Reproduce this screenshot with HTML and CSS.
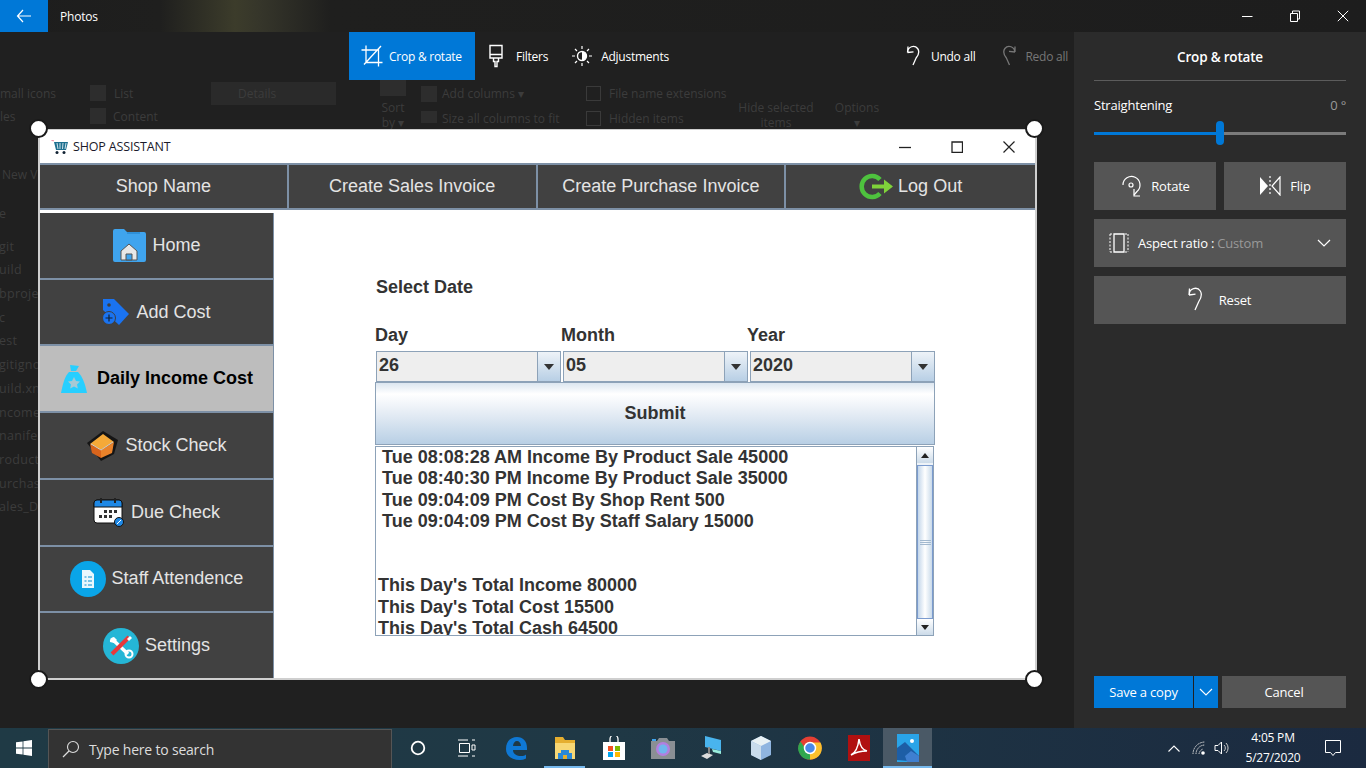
FILE: index.html
```html
<!DOCTYPE html>
<html lang="en">
<head>
<meta charset="utf-8">
<title>Photos</title>
<link rel="stylesheet" href="styles.css">
</head>
<body>
<div class="screen">
  <header class="titlebar">
    <button class="back" aria-label="Back"><svg width="16" height="16" viewBox="0 0 16 16"><path d="M7 2 1.5 8 7 14M1.5 8H15" fill="none" stroke="#fff" stroke-width="1.2"/></svg></button>
    <span class="app-name">Photos</span>
    <div class="win-controls">
      <svg width="12" height="12" viewBox="0 0 12 12"><path d="M1 6.5h10.5" stroke="#fff" fill="none"/></svg>
      <svg width="12" height="12" viewBox="0 0 12 12"><path d="M1.5 3.5h7v8h-7zM3.5 3.5v-2.500h7v8h-2" stroke="#fff" fill="none"/></svg>
      <svg width="12" height="12" viewBox="0 0 12 12"><path d="M.8.800l10.400 10.400M11.200.800.800 11.200" stroke="#fff" fill="none"/></svg>
    </div>
  </header>

  <div class="workspace">
    <main class="stage">
      <div class="ghosts">
        <span class="ghost g1">mall icons</span><span class="ghost g2">List</span><span class="ghost g3">Details</span><span class="ghost g4">les</span><span class="ghost g5">Content</span>
        <span class="ghost g6">Sort<br>by ▾</span><span class="ghost g7">Add columns ▾</span><span class="ghost g8">Size all columns to fit</span><span class="ghost g9">File name extensions</span><span class="ghost g10">Hidden items</span>
        <span class="ghost g11">Hide selected<br>items</span><span class="ghost g12">Options<br>▾</span><span class="ghost g13">New V</span>
        <div class="ghost-list"><span>e</span><span class="gap-line">git</span><span>uild</span><span>bproje</span><span>c</span><span>est</span><span>gitigno</span><span>uild.xn</span><span>ncome_</span><span>nanifes</span><span>roduct</span><span>urchas</span><span>ales_Da</span></div>
        <i class="ghost-box b1"></i><i class="ghost-box b2"></i><i class="ghost-box b3"></i><i class="ghost-box b4"></i><i class="ghost-box b5"></i><i class="ghost-box b6"></i><i class="ghost-box b7"></i>
      </div>

      <nav class="toolbar">
        <div class="tool tool-crop">
          <svg width="22" height="22" viewBox="0 0 22 22"><path d="M5 .500V17.500H21.500M.500 5H17.500V21.500M3 19.500 20 1" fill="none" stroke="#fff" stroke-width="1.300"/></svg>
          <span>Crop &amp; rotate</span>
        </div>
        <div class="tool tool-filters">
          <svg width="16" height="24" viewBox="0 0 16 24"><path d="M2 1.500h12V14H2zM2 10.500h12M5.500 14v3.500h1.500v5h2v-5h1.500V14" fill="none" stroke="#fff" stroke-width="1.400"/></svg>
          <span>Filters</span>
        </div>
        <div class="tool tool-adjust">
          <svg width="20" height="20" viewBox="0 0 20 20"><circle cx="10" cy="10" r="4.500" fill="none" stroke="#fff" stroke-width="1.400"/><path d="M10 5.500a4.500 4.500 0 0 1 0 9z" fill="#fff"/><path d="M10 0v3M10 17v3M0 10h3M17 10h3M3 3l2 2M15 15l2 2M17 3l-2 2M5 15l-2 2" stroke="#fff" stroke-width="1.200"/></svg>
          <span>Adjustments</span>
        </div>
        <div class="tool tool-undo">
          <svg width="16" height="22" viewBox="0 0 16 22"><path d="M1.500 7.500 2 1.500M1.500 7.500 7.500 6.800M1.800 7a5.500 5.500 0 0 1 9.800-3.500c2.500 3.500.500 7-1.500 9.500L7 20" fill="none" stroke="#fff" stroke-width="1.300"/></svg>
          <span>Undo all</span>
        </div>
        <div class="tool tool-redo">
          <svg width="16" height="22" viewBox="0 0 16 22"><path d="M14 7 14 1.500M14 7 8 6.300M13.700 7a5.500 5.500 0 0 0-9.800-3.500c-2.500 3.500-.500 7 1.500 9.500L8.500 20" fill="none" stroke="#777" stroke-width="1.300"/></svg>
          <span>Redo all</span>
        </div>
      </nav>

      <section class="app-window">
        <i class="handle h-tl"></i><i class="handle h-tr"></i><i class="handle h-bl"></i><i class="handle h-br"></i>
        <div class="app-title">
          <svg width="18" height="16" viewBox="0 0 18 16"><path d="M.5 1.500 3 1.800" stroke="#f08aa0" fill="none"/><path d="M3 3h14l-2 8H5z" fill="#1d6f8f"/><path d="M6 4l1 6M9 4v6M12 4l-.5 6M15 4l-1 6" stroke="#fff" stroke-width=".8"/><circle cx="6" cy="13.500" r="1.500" fill="#123"/><circle cx="13" cy="13.500" r="1.500" fill="#123"/></svg>
          <span class="app-title-text">SHOP ASSISTANT</span>
          <div class="app-controls">
            <svg width="12" height="12" viewBox="0 0 12 12"><path d="M0 6.500h12" stroke="#222" stroke-width="1.300" fill="none"/></svg>
            <svg width="12" height="12" viewBox="0 0 12 12"><path d="M1 1h10.500v10.500H1z" stroke="#222" stroke-width="1.300" fill="none"/></svg>
            <svg width="12" height="12" viewBox="0 0 12 12"><path d="M.5.500l11 11M11.500.500l-11 11" stroke="#222" stroke-width="1.200" fill="none"/></svg>
          </div>
        </div>
        <div class="app-nav">
          <div class="nav-cell">Shop Name</div>
          <div class="nav-cell">Create Sales Invoice</div>
          <div class="nav-cell">Create Purchase Invoice</div>
          <div class="nav-cell nav-logout">
            <svg width="35" height="27" viewBox="0 0 35 27"><path d="M21 6.500A10.500 10.500 0 1 0 21 20.500" fill="none" stroke="#4ec23e" stroke-width="4.500"/><path d="M13 11.500h12V6.500l9 7-9 7v-5H13z" fill="#7fd23a"/></svg>
            <span>Log Out</span>
          </div>
        </div>
        <div class="app-body">
          <aside class="sidebar">
            <div class="side-item">
              <svg width="34" height="34" viewBox="0 0 34 34"><path d="M1 3a2 2 0 0 1 2-2h9l3 3h17a2 2 0 0 1 2 2v26a2 2 0 0 1-2 2H3a2 2 0 0 1-2-2z" fill="#3fa4ee"/><path d="M15 5h13" stroke="#1f7cc4"/><path d="M9 23l8-7 8 7v9H9z" fill="#e8e8e8" stroke="#555"/><path d="M14 32v-6h6v6z" fill="#3fa4ee" stroke="#555"/></svg>
              <span>Home</span>
            </div>
            <div class="side-item">
              <svg width="28" height="28" viewBox="0 0 28 28"><path d="M1 1h11l15 15-10 11L1 12z" fill="#1a73f0"/><circle cx="7" cy="7" r="1.800" fill="#3f3f3f"/><circle cx="7" cy="20" r="6.500" fill="#1a73f0" stroke="#3f3f3f"/><path d="M3.500 20h7M7 16.500v7" stroke="#123" stroke-width="1.200"/></svg>
              <span>Add Cost</span>
            </div>
            <div class="side-item active">
              <svg width="28" height="30" viewBox="0 0 28 30"><path d="M10 1l9 1-3 5h-5z" fill="#27cfff"/><path d="M9 8h9c4 4 7 11 9 21H1C3 19 5 12 9 8z" fill="#27cfff"/><path d="M14 13l2 4 4 .5-3 3 .8 4-3.800-2-3.800 2 .8-4-3-3 4-.5z" fill="#a6c9d4"/></svg>
              <span>Daily Income Cost</span>
            </div>
            <div class="side-item">
              <svg width="33" height="32" viewBox="0 0 33 32"><path d="M1 13 17 1l15 9-4 14-13 7z" fill="#151515"/><path d="M4 14 17 4l11 8-13 8z" fill="#f5a938"/><path d="M4 14l11 6v8l-9-5z" fill="#d8641c"/><path d="M15 20l13-8-2 11-11 5z" fill="#e9822a"/><path d="M5 14l10 6 12-8" stroke="#ccc" fill="none"/></svg>
              <span>Stock Check</span>
            </div>
            <div class="side-item">
              <svg width="32" height="30" viewBox="0 0 32 30"><rect x="1" y="3" width="28" height="23" rx="3" fill="#fff" stroke="#111"/><path d="M1 10V6a3 3 0 0 1 3-3h22a3 3 0 0 1 3 3v4z" fill="#1e88e5" stroke="#111"/><path d="M8 1v5M22 1v5" stroke="#222" stroke-width="2"/><path d="M11 13h3v3h-3zM16 13h3v3h-3zM21 13h3v3h-3zM6 18h3v3H6zM11 18h3v3h-3zM16 18h3v3h-3z" fill="#333"/><circle cx="26" cy="25" r="4.500" fill="#1e88e5" stroke="#111"/><path d="M24 27l4-4" stroke="#fff"/></svg>
              <span>Due Check</span>
            </div>
            <div class="side-item">
              <svg width="36" height="36" viewBox="0 0 36 36"><circle cx="18" cy="18" r="18" fill="#0aa5e8"/><path d="M12 9h8l4 4v14H12z" fill="#e9f7fd"/><path d="M14.500 16h2M18 16h4M14.500 20h2M18 20h4M14.500 24h2M18 24h4" stroke="#0a8fd0"/></svg>
              <span>Staff Attendence</span>
            </div>
            <div class="side-item">
              <svg width="36" height="36" viewBox="0 0 36 36"><circle cx="18" cy="18" r="18" fill="#25b6d6"/><path d="M9 11l16 15" stroke="#fff" stroke-width="3.500"/><circle cx="26" cy="26" r="3.500" fill="none" stroke="#fff" stroke-width="2"/><path d="M11 9a4 4 0 0 0-4 5l4 1 3-3z" fill="#fff"/><path d="M26 9l-17 17" stroke="#e8383a" stroke-width="4"/><path d="M24 11l3-3 2 2-3 3z" fill="#fff"/></svg>
              <span>Settings</span>
            </div>
          </aside>
          <div class="content">
            <h2 class="select-date">Select Date</h2>
            <div class="date-labels"><span>Day</span><span>Month</span><span>Year</span></div>
            <div class="combos">
              <div class="combo"><span class="combo-value">26</span><span class="combo-arrow"><i></i></span></div>
              <div class="combo"><span class="combo-value">05</span><span class="combo-arrow"><i></i></span></div>
              <div class="combo"><span class="combo-value">2020</span><span class="combo-arrow"><i></i></span></div>
            </div>
            <button class="submit">Submit</button>
            <div class="report">
              <div class="report-text">
                <p class="entry">Tue 08:08:28 AM Income By Product Sale 45000</p>
                <p class="entry">Tue 08:40:30 PM Income By Product Sale 35000</p>
                <p class="entry">Tue 09:04:09 PM Cost By Shop Rent 500</p>
                <p class="entry">Tue 09:04:09 PM Cost By Staff Salary 15000</p>
                <p class="blank">&nbsp;</p>
                <p class="blank">&nbsp;</p>
                <p>This Day's Total Income 80000</p>
                <p>This Day's Total Cost 15500</p>
                <p>This Day's Total Cash 64500</p>
              </div>
              <div class="scrollbar">
                <span class="sb-btn"><i class="up"></i></span>
                <span class="sb-thumb"><b></b></span>
                <span class="sb-btn"><i></i></span>
              </div>
            </div>
          </div>
        </div>
      </section>
    </main>

    <aside class="panel">
      <h1 class="panel-title">Crop &amp; rotate</h1>
      <div class="straight-row"><span>Straightening</span><span class="degree">0 °</span></div>
      <div class="slider"><i class="slider-fill"></i><i class="slider-thumb"></i></div>
      <div class="btn-row">
        <button class="pbtn">
          <svg width="22" height="26" viewBox="0 0 22 26"><path d="M3 12A8.500 8.500 0 1 1 17 18.500L14 22" fill="none" stroke="#fff" stroke-width="1.200"/><path d="M14 16v7h6" fill="none" stroke="#fff" stroke-width="1.200"/><circle cx="11" cy="12" r="2" fill="none" stroke="#fff" stroke-width="1.200"/></svg>
          <span>Rotate</span>
        </button>
        <button class="pbtn">
          <svg width="22" height="20" viewBox="0 0 22 20"><path d="M1 1l8 9-8 9z" fill="#fff"/><path d="M21 1l-8 9 8 9zM11 0v2M11 4v2M11 8v2M11 12v2M11 16v2" fill="none" stroke="#fff" stroke-width="1.200"/></svg>
          <span>Flip</span>
        </button>
      </div>
      <button class="pbtn aspect">
        <svg width="20" height="20" viewBox="0 0 20 20"><path d="M5 1h10v18H5z" fill="none" stroke="#fff" stroke-width="1.300"/><path d="M1 1h3M1 19h3M16 1h3M16 19h3M1 1v18M19 1v18" fill="none" stroke="#fff" stroke-dasharray="2 1.500"/></svg>
        <span class="aspect-text">Aspect ratio : <em>Custom</em></span>
        <svg width="14" height="9" viewBox="0 0 14 9"><path d="M1 1l6 6 6-6" fill="none" stroke="#fff" stroke-width="1.200"/></svg>
      </button>
      <button class="pbtn reset">
        <svg width="18" height="26" viewBox="0 0 18 26"><path d="M2 8 2.500 1.500M2 8l6.500-.8M2.300 7.500a6 6 0 0 1 11-3.500c2.500 4 .500 7.500-1.500 10.500L8 23" fill="none" stroke="#fff" stroke-width="1.300"/></svg>
        <span>Reset</span>
      </button>
      <div class="panel-foot">
        <button class="save">Save a copy</button>
        <button class="save-more" aria-label="More"><svg width="14" height="8" viewBox="0 0 14 8"><path d="M1 1l6 6 6-6" fill="none" stroke="#fff" stroke-width="1.100"/></svg></button>
        <button class="cancel">Cancel</button>
      </div>
    </aside>
  </div>

  <footer class="taskbar">
    <svg class="start" width="16" height="16" viewBox="0 0 16 16"><path d="M0 2.300 6.600 1.400V7.600H0zM7.400 1.300 16 0V7.600H7.400zM0 8.400H6.600V14.600L0 13.700zM7.400 8.400H16V16L7.400 14.700z" fill="#fff"/></svg>
    <div class="searchbox">
      <svg width="18" height="18" viewBox="0 0 18 18"><circle cx="11" cy="7" r="5.500" fill="none" stroke="#ddd" stroke-width="1.100"/><path d="M7 11 1 17" stroke="#ddd" stroke-width="1.200"/></svg>
      <span>Type here to search</span>
    </div>
    <div class="tb-icons">
      <span class="tb-item"><svg width="16" height="16" viewBox="0 0 16 16"><circle cx="8" cy="8" r="6.300" fill="none" stroke="#fff" stroke-width="1.800"/></svg></span>
      <span class="tb-item"><svg width="18" height="18" viewBox="0 0 18 18"><path d="M0 1h10M0 17h10M1.500 4.500h10v9h-10z" fill="none" stroke="#fff" stroke-width="1"/><path d="M14 1h3M14 17h3M14 6h3v5h-3z" fill="none" stroke="#fff"/></svg></span>
      <span class="tb-item"><svg width="22" height="24" viewBox="0 0 22 24"><path d="M1 13C1 5 6 1 12 1c6 0 10 4 10 11v2H8c0 4 4 6 8 6 2 0 4-.5 5-1.500v4c-2 1-4 1.500-6 1.500C7 24 1 20 1 13zM8 10h8c0-3-2-5-4-5s-4 2-4 5z" fill="#0f78d4"/></svg></span>
      <span class="tb-item on"><svg width="22" height="24" viewBox="0 0 22 24"><path d="M1 1h8l2 3h10v19H1z" fill="#e5ae2f"/><path d="M1 7h20v16H1z" fill="#f7d774"/><path d="M7 14h8v3h3v6H4v-6h3z" fill="#2a88d8"/><path d="M9 19h4v4H9z" fill="#e5ae2f"/></svg></span>
      <span class="tb-item"><svg width="22" height="24" viewBox="0 0 22 24"><path d="M0 6h22v18H0z" fill="#fff"/><path d="M7 8V3a4 4 0 0 1 8 0v5" fill="none" stroke="#fff" stroke-width="1.300"/><path d="M5 10h5v5H5z" fill="#f25022"/><path d="M12 10h5v5h-5z" fill="#7fba00"/><path d="M5 16h5v5H5z" fill="#00a4ef"/><path d="M12 16h5v5h-5z" fill="#ffb900"/></svg></span>
      <span class="tb-item"><svg width="24" height="22" viewBox="0 0 24 22"><path d="M0 4h6l2-3h8l2 3h6v18H0z" fill="#8a8f94"/><circle cx="12" cy="12" r="7" fill="#b27fe0"/><circle cx="12" cy="12" r="4.500" fill="#6fb6ee"/><path d="M1 2h4v2H1z" fill="#3fa4ee"/></svg></span>
      <span class="tb-item"><svg width="24" height="26" viewBox="0 0 24 26"><path d="M5 1l16 4v11L5 12z" fill="#49b4ee"/><path d="M21 16l-9-2 1 3 8 2z" fill="#9ed"/><path d="M1 21l6-3 6 2-6 4z" fill="#ddd"/><path d="M9 12v7" stroke="#888" stroke-width="2"/></svg></span>
      <span class="tb-item"><svg width="22" height="26" viewBox="0 0 22 26"><path d="M11 1l10 5v14l-10 5L1 20V6z" fill="#8fb5e0"/><path d="M11 1l10 5-10 5L1 6z" fill="#e8f1f4"/><path d="M11 11v14L1 20V6z" fill="#c9dcec"/></svg></span>
      <span class="tb-item"><svg width="24" height="24" viewBox="0 0 24 24"><circle cx="12" cy="12" r="11.500" fill="#e53f33"/><path d="M12 12 2 18.500A11.500 11.500 0 0 0 12 23.500l1-.1z" fill="#2fa84f"/><path d="M12 6.500h10.500A11.500 11.500 0 0 1 13 23.500l-1-.1z" fill="#fbc02d"/><path d="M2 18.500A11.500 11.500 0 0 1 2.500 5.500L9 15z" fill="#2fa84f"/><circle cx="12" cy="12" r="5.500" fill="#4a89e8" stroke="#fff" stroke-width="1.500"/></svg></span>
      <span class="tb-item"><svg width="22" height="26" viewBox="0 0 22 26"><path d="M0 0h22v26H0z" fill="#b01010"/><path d="M3 20c4-2 7-7 8-16 1 7 3 11 8 12-5 0-11 1-16 4z" fill="none" stroke="#fff" stroke-width="1.500"/></svg></span>
      <span class="tb-item on current"><svg width="22" height="28" viewBox="0 0 22 28"><path d="M0 0h22v28H0z" fill="#2aa4e8"/><path d="M0 26V14l8-6 14 14v6z" fill="#1d5ea6"/><path d="M10 28l-2-6 6-5 8 5v6z" fill="#3f7fd0"/><circle cx="15" cy="7" r="2" fill="#fff"/></svg></span>
    </div>
    <div class="tray">
      <svg width="12" height="7" viewBox="0 0 12 7"><path d="M.5 6.500 6 1l5.500 5.500" fill="none" stroke="#fff" stroke-width="1.100"/></svg>
      <svg class="tray-net" width="14" height="14" viewBox="0 0 14 14"><path d="M1 13A12 12 0 0 1 13 1M4 13a9 9 0 0 1 9-9M7 13a6 6 0 0 1 4-5" fill="none" stroke="#ddd" stroke-dasharray="1.500 .8"/><circle cx="11" cy="12" r="1.800" fill="#fff"/></svg>
      <svg class="tray-vol" width="16" height="16" viewBox="0 0 16 16"><path d="M1 5.500h3L7.500 2v12L4 10.500H1z" fill="none" stroke="#fff"/><path d="M10 5a4 4 0 0 1 0 6M12 3a7 7 0 0 1 0 10" fill="none" stroke="#ccc"/></svg>
      <div class="clock"><span>4:05 PM</span><span>5/27/2020</span></div>
      <svg class="tray-note" width="16" height="16" viewBox="0 0 16 16"><path d="M.500.500h15v12h-5l-2.500 3-2.500-3h-5z" fill="none" stroke="#fff"/></svg>
    </div>
  </footer>
</div>
</body>
</html>
```
FILE: styles.css
```css
* { box-sizing: border-box; }
html, body { margin: 0; padding: 0; }
body { width: 1366px; height: 768px; overflow: hidden; background: #202020; font-family: "Open Sans", "Noto Sans", sans-serif; }
button { font: inherit; color: inherit; border: 0; padding: 0; }
h1, h2, p { margin: 0; }
svg { display: block; flex: none; }
em { font-style: normal; }

.screen { width: 1366px; height: 768px; display: flex; flex-direction: column; }

.titlebar { height: 32px; flex: none; display: flex; align-items: center; color: #fff; font-size: 12px;
  background: linear-gradient(90deg, #1d1d1d 0, #1f1f1e 160px, #3c3c2b 235px, #35352a 262px, #1f1f1e 330px, #1d1d1d 100%); }
.back { width: 48px; height: 32px; background: #0078d7; display: flex; align-items: center; justify-content: center; }
.app-name { margin-left: 12px; letter-spacing: -.2px; }
.win-controls { margin-left: auto; display: flex; gap: 36px; padding-right: 17px; }

.workspace { height: 696px; flex: none; display: flex; }
.stage { width: 1074px; position: relative; background: #202020; }
.panel { width: 292px; background: #2b2b2b; color: #fff; padding: 0 20px; display: flex; flex-direction: column; font-size: 13px; }

.toolbar { height: 48px; display: flex; align-items: stretch; padding-left: 349px; position: relative; color: #fff; font-size: 12px; letter-spacing: -.25px; }
.tool { display: flex; align-items: center; }
.tool-crop { width: 126px; background: #0078d7; padding-left: 12px; gap: 6px; }
.tool-filters { margin-left: 13px; gap: 12px; }
.tool-adjust { margin-left: 24px; gap: 9px; }
.tool-undo { margin-left: 237px; gap: 9px; }
.tool-redo { margin-left: 26px; gap: 8px; color: #777; }

.ghosts { position: absolute; left: 0; top: 0; width: 1074px; height: 696px; overflow: hidden; color: #3c3c3c; font-size: 12px; line-height: 15px; }
.ghost { position: absolute; white-space: nowrap; }
.g1 { left: 0; top: 54px; }
.g2 { left: 114px; top: 54px; }
.g3 { left: 211px; top: 50px; width: 125px; height: 23px; background: #2a2a2a; padding: 4px 0 0 27px; }
.g4 { left: 0; top: 77px; }
.g5 { left: 113px; top: 77px; }
.g6 { left: 380px; top: 68px; width: 26px; text-align: center; }
.g7 { left: 442px; top: 54px; }
.g8 { left: 442px; top: 79px; }
.g9 { left: 609px; top: 54px; }
.g10 { left: 609px; top: 79px; }
.g11 { left: 736px; top: 68px; width: 80px; text-align: center; }
.g12 { left: 834px; top: 68px; width: 46px; text-align: center; }
.g13 { left: 2px; top: 135px; }
.ghost-list { position: absolute; left: -1px; top: 170px; display: flex; flex-direction: column; font-size: 12.500px; line-height: 23.700px; letter-spacing: .3px; }
.ghost-list span { height: 23.700px; }
.ghost-list .gap-line { margin-top: 9px; }
.ghost-box { position: absolute; background: #2d2d2d; }
.b1 { left: 90px; top: 53px; width: 16px; height: 16px; }
.b2 { left: 90px; top: 76px; width: 16px; height: 16px; }
.b3 { left: 380px; top: 44px; width: 26px; height: 20px; }
.b4 { left: 421px; top: 54px; width: 16px; height: 16px; }
.b5 { left: 421px; top: 79px; width: 16px; height: 12px; }
.b6 { left: 586px; top: 54px; width: 15px; height: 15px; border: 1px solid #3a3a3a; background: none; }
.b7 { left: 586px; top: 79px; width: 15px; height: 15px; border: 1px solid #3a3a3a; background: none; }

.app-window { position: absolute; left: 38px; top: 97px; width: 999px; height: 551px; background: #fff; border: solid #cfcfcf; border-width: 1px 2px 2px; display: flex; flex-direction: column; font-family: "Liberation Sans", Arial, sans-serif; }
.handle { position: absolute; width: 19px; height: 19px; border-radius: 50%; background: #fff; border: 2px solid #1a1a1a; z-index: 2; }
.h-tl { left: -11px; top: -11px; }
.h-tr { right: -9px; top: -11px; }
.h-bl { left: -11px; bottom: -11px; }
.h-br { right: -9px; bottom: -11px; }

.app-title { height: 33px; flex: none; display: flex; align-items: center; padding-left: 11px; gap: 4px; }
.app-title-text { font-family: "Open Sans", sans-serif; font-size: 12.500px; color: #1a1a2a; letter-spacing: -.15px; }
.app-controls { margin-left: auto; display: flex; gap: 40px; padding-right: 20px; }

.app-nav { height: 47px; flex: none; display: grid; grid-template-columns: repeat(4, 1fr); background: #414141; border: solid #7d90a6; border-width: 2px 0; }
.nav-cell { display: flex; align-items: center; justify-content: center; color: #e4e4e4; font-size: 18px; border-right: 2px solid #7d90a6; gap: 4px; }
.nav-cell:last-child { border-right: 0; }

.app-body { flex: 1; display: flex; min-height: 0; }
.sidebar { width: 234px; flex: none; margin-top: 3px; display: flex; flex-direction: column; background: #414141; border-right: 1px solid #7d90a6; }
.side-item { flex: 1; display: flex; align-items: center; justify-content: center; gap: 6px; color: #e4e4e4; font-size: 18px; border-bottom: 2px solid #7d90a6; white-space: nowrap; }
.side-item:last-child { border-bottom: 0; }
.side-item.active { background: #bdbdbd; color: #000; font-weight: 700; gap: 9px; }

.content { flex: 1; padding: 65px 0 0 101px; color: #333; }
.select-date { font-size: 18px; font-weight: 700; line-height: 24px; margin-left: 1px; }
.date-labels { display: grid; grid-template-columns: 186px 186px 1fr; width: 560px; font-size: 18px; font-weight: 700; line-height: 24px; margin-top: 24px; }
.combos { display: flex; width: 560px; margin-top: 4px; gap: 2px; padding-left: 1px; }
.combo { flex: 1; height: 31px; display: flex; border: 1px solid #8da2b8; background: #eee; }
.combo-value { flex: 1; font-size: 18px; font-weight: 700; line-height: 27px; padding-left: 2px; border-right: 1px solid #8da2b8; }
.combo-arrow { width: 22px; flex: none; display: flex; align-items: center; justify-content: center; background: linear-gradient(#eef3f8, #b8cfe5); }
.combo-arrow i { width: 0; height: 0; border: solid transparent; border-width: 6px 5.500px 0; border-top-color: #333; }
.submit { display: block; width: 560px; height: 63px; background: linear-gradient(#dce6f0 0, #fff 18%, #e9eff6 45%, #b8cfe5 100%); border: 1px solid #8da2b8; font-size: 18px; font-weight: 700; color: #333; }
.report { width: 559px; height: 190px; margin-top: 1px; border: 1px solid #8da2b8; background: #fff; display: flex; overflow: hidden; }
.report-text { flex: 1; font-size: 18px; font-weight: 700; line-height: 21.400px; padding: 0 0 0 2px; color: #333; white-space: nowrap; overflow: hidden; }
.entry { padding-left: 4px; }
.scrollbar { width: 17px; flex: none; display: flex; flex-direction: column; border-left: 1px solid #8da2b8; background: #eef3f8; }
.sb-btn { height: 16px; flex: none; display: flex; align-items: center; justify-content: center; background: linear-gradient(#fff, #ccdbe9); }
.sb-btn i { width: 0; height: 0; border: solid transparent; border-width: 5px 4.500px 0; border-top-color: #222; }
.sb-btn i.up { border-width: 0 4.500px 5px; border-bottom-color: #222; }
.sb-thumb { flex: 1; margin: 2px 0 0; display: flex; align-items: center; justify-content: center; border: 1px solid #7b9bcf; background: linear-gradient(90deg, #c3d6ea, #fff 50%, #c9daea); }
.sb-thumb b { width: 11px; height: 5px; border: solid #a3b9cf; border-width: 1px 0; background: linear-gradient(#a3b9cf, #a3b9cf) center/100% 1px no-repeat; }

.panel-title { height: 49px; font-size: 13.500px; font-weight: 600; text-align: center; line-height: 50px; border-bottom: 1px solid #5c5c5c; letter-spacing: -.2px; }
.straight-row { display: flex; justify-content: space-between; margin-top: 14px; line-height: 20px; letter-spacing: -.2px; }
.degree { color: #9a9a9a; }
.slider { height: 3px; margin-top: 17px; background: #7b7b7b; position: relative; }
.slider-fill { position: absolute; left: 0; top: 0; bottom: 0; width: 126px; background: #0078d7; }
.slider-thumb { position: absolute; left: 122px; top: -11px; width: 8px; height: 24px; border-radius: 4px; background: #0078d7; }
.btn-row { display: flex; gap: 8px; margin-top: 27px; }
.pbtn { flex: 1; height: 48px; background: #555; color: #fff; display: flex; align-items: center; justify-content: center; gap: 9px; font-size: 13px; letter-spacing: -.2px; }
.aspect { flex: none; width: 252px; margin-top: 9px; justify-content: flex-start; padding: 0 15px; gap: 9px; }
.aspect-text { flex: 1; text-align: left; }
.aspect-text em { color: #999; }
.reset { flex: none; width: 252px; margin-top: 9px; gap: 14px; padding-right: 2px; }
.panel-foot { margin-top: auto; margin-bottom: 20px; display: flex; height: 32px; }
.save { width: 99px; background: #0078d7; color: #fff; font-size: 13px; letter-spacing: -.2px; }
.save-more { width: 25px; margin-left: 0; background: #0078d7; border-left: 1px solid #202020; display: flex; align-items: center; justify-content: center; }
.cancel { width: 124px; margin-left: 4px; background: #555; color: #fff; font-size: 13px; letter-spacing: -.2px; }

.taskbar { height: 40px; flex: none; display: flex; align-items: center; color: #fff; background: linear-gradient(90deg, #1f3a45 0, #1f3845 45%, #1b2a40 100%); }
.start { margin-left: 16px; }
.searchbox { width: 344px; height: 39px; margin: 1px 0 0 16px; background: #333; border: 1px solid #555; border-bottom: 0; display: flex; align-items: center; padding-left: 13px; gap: 9px; color: #ddd; font-size: 14px; letter-spacing: -.2px; }
.tb-icons { display: flex; margin-left: 1px; height: 40px; }
.tb-item { width: 49px; height: 40px; display: flex; align-items: center; justify-content: center; position: relative; }
.tb-item.on::after { content: ""; position: absolute; left: 4px; right: 4px; bottom: 0; height: 2px; background: #76b9ed; }
.tb-item.current { background: #4a5966; }
.tb-item.current::after { left: 0; right: 0; }
.tray { margin-left: auto; display: flex; align-items: center; padding-right: 25px; }
.tray-net { margin-left: 12px; }
.tray-vol { margin-left: 8px; }
.clock { width: 72px; margin-left: 7px; display: flex; flex-direction: column; align-items: center; font-size: 12px; line-height: 20px; letter-spacing: -.2px; }
.tray-note { margin-left: 16px; }
```
